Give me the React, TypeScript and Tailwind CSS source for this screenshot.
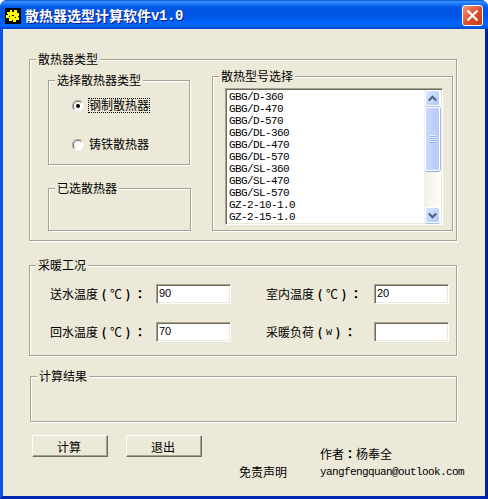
import { useState } from 'react';
import type { ReactNode } from 'react';

const MODELS = [
    'GBG/D-360',
    'GBG/D-470',
    'GBG/D-570',
    'GBG/DL-360',
    'GBG/DL-470',
    'GBG/DL-570',
    'GBG/SL-360',
    'GBG/SL-470',
    'GBG/SL-570',
    'GZ-2-10-1.0',
    'GZ-2-15-1.0'
];

const SUNKEN = 'bg-white border border-t-[#a5a294] border-l-[#a5a294] border-r-white border-b-white shadow-[inset_1px_1px_0_#6f6c60,inset_-1px_-1px_0_#ece9d8]';

interface GroupProps {
    title: string;
    className: string;
    children?: ReactNode;
}

// Etched frame: gray line with a white line one pixel down and right
function GroupBox({ title, className, children }: GroupProps) {
    return (
        <div className={`relative shrink-0 border border-[#a5a294] shadow-[1px_1px_0_#fff,inset_1px_1px_0_#fff] ${className}`}>
            <span className="absolute -top-[8px] left-[6px] px-[2px] h-[14px] leading-[14px] bg-[#ece9d8] whitespace-nowrap">{title}</span>
            {children}
        </div>
    );
}

function Radio({ checked, label, onSelect }: { checked: boolean; label: string; onSelect: () => void }) {
    return (
        <button type="button" onClick={onSelect} className="flex items-center h-[15px]">
            <svg width="12" height="12" viewBox="0 0 12 12" className="mr-1">
                <circle cx="6" cy="6" r="5.5" fill="#fff" />
                <path d="M1.9 10.1A5.5 5.5 0 0 1 10.1 1.9" fill="none" stroke="#a5a294" />
                <path d="M2.8 9.2A4.5 4.5 0 0 1 9.2 2.8" fill="none" stroke="#6f6c60" />
                {checked && <circle cx="6" cy="6" r="2" fill="#000" />}
            </svg>
            <span className={`h-[15px] w-[62px] leading-[12px] border border-dotted text-left whitespace-nowrap ${checked ? 'border-black' : 'border-transparent'}`}>{label}</span>
        </button>
    );
}

function Field({ label, unit, value, unitClass, inputGap }: { label: string; unit: string; value: string; unitClass: string; inputGap: string }) {
    const [text, setText] = useState(value);
    return (
        <label className="flex items-center h-5">
            <span className={`flex h-5 leading-5 whitespace-nowrap ${inputGap}`}>
                <span>{label}</span>
                <span className="w-3 text-center font-bold">(</span>
                <span className={`text-center ${unitClass}`}>{unit}</span>
                <span className="w-3 text-center font-bold">)</span>
                <span className="w-3 text-center font-bold font-['Noto_Sans_CJK_TC',sans-serif]">：</span>
            </span>
            <input
                value={text}
                onChange={e => setText(e.target.value)}
                className={`w-[75px] h-5 pl-[2px] pb-[2px] outline-none text-[11px] font-['Liberation_Sans',sans-serif] ${SUNKEN}`}
            />
        </label>
    );
}

function PushButton({ children }: { children: ReactNode }) {
    return (
        <button type="button" className="w-[76px] h-[22px] leading-[19px] pr-[2px] border border-t-white border-l-white border-r-[#6f6c60] border-b-[#6f6c60] shadow-[inset_-1px_-1px_0_#a5a294]">
            {children}
        </button>
    );
}

function ArrowButton({ down }: { down?: boolean }) {
    return (
        <div className="w-[15px] h-[16px] rounded-[2px] border border-white bg-gradient-to-br from-[#dbe6ff] to-[#b3c8f9] shadow-[0_1px_0_#a9bde9] flex items-center justify-center">
            <svg width="9" height="7" viewBox="0 0 9 7">
                <path d={down ? 'M0.8 1.5L4.5 5.2L8.2 1.5' : 'M0.8 5.5L4.5 1.8L8.2 5.5'} fill="none" stroke="#4d6185" strokeWidth="2.2" />
            </svg>
        </div>
    );
}

export default function App() {
    const [material, setMaterial] = useState('steel');

    return (
        <div className="w-[488px] h-[499px] bg-white font-['Noto_Sans_CJK_SC',sans-serif] text-[12px] text-black overflow-hidden">
            <div className="w-full h-full flex flex-col rounded-t-[7px] overflow-hidden bg-[#0144dc]">

                {/* Title bar */}
                <div className="h-[29px] shrink-0 flex items-center pl-[5px] pr-[5px] pt-[2px] bg-[linear-gradient(to_bottom,#0452c8_0%,#3b92ff_6%,#1a74f5_14%,#0257e6_26%,#0054e3_55%,#0262fb_75%,#0266ff_88%,#0147cb_100%)]">
                    <svg width="16" height="16" viewBox="0 0 16 16" shapeRendering="crispEdges">
                        <rect width="16" height="16" fill="#000" />
                        <path fill="#ff0" d="M5 2h2v2h2V2h3v3h2v3h-1v1h1v3h-3v2H8v-2H7v1H4v-3H1V7h2V6H2V4h3z" />
                        <path fill="#000" d="M7 7h2v1H7zM4 8h1v1H4zM10 9h1v1h-1z" />
                    </svg>
                    <h1 className="ml-1 flex-1 flex text-[14px] leading-[20px] font-bold text-white whitespace-nowrap [text-shadow:1px_1px_0_#0a1883]">
                        散热器选型计算软件
                        <span className="pt-px font-['Liberation_Mono',monospace] text-[14px] tracking-[-0.4px]">v1.0</span>
                    </h1>
                    <button type="button" className="w-[21px] h-[21px] rounded-[3px] border border-white bg-gradient-to-br from-[#ee9678] via-[#e0502f] to-[#c4390f] flex items-center justify-center">
                        <svg width="13" height="13" viewBox="0 0 13 13">
                            <path d="M1.5 1.5L11.5 11.5M11.5 1.5L1.5 11.5" stroke="#fff" strokeWidth="2.2" />
                        </svg>
                    </button>
                </div>

                <div className="flex-1 flex flex-col border-[3px] border-t-0 border-l-[#0855e8] border-r-[#001ea0] border-b-[#0025b0] bg-[#ece9d8] pl-[26px] pt-[30px]">

                    <GroupBox title="散热器类型" className="w-[428px] h-[182px] flex pl-[18px]">
                        <div className="flex flex-col pt-[20px]">
                            <GroupBox title="选择散热器类型" className="w-[142px] h-[85px] flex flex-col gap-[24px] pl-[23px] pt-[17px]">
                                <Radio checked={material === 'steel'} label="钢制散热器" onSelect={() => setMaterial('steel')} />
                                <Radio checked={material === 'iron'} label="铸铁散热器" onSelect={() => setMaterial('iron')} />
                            </GroupBox>
                            <GroupBox title="已选散热器" className="mt-[23px] w-[143px] h-[43px]" />
                        </div>

                        <GroupBox title="散热型号选择" className="ml-[21px] mt-[16px] w-[241px] h-[155px] pl-[12px] pt-[11px]">
                            <div className={`w-[218px] h-[137px] flex justify-between p-[1px] ${SUNKEN}`}>
                                <ul className="pl-[2px] pt-[1px] font-['Liberation_Mono',monospace] text-[11px] tracking-[-0.6px] leading-3 whitespace-nowrap">
                                    {MODELS.map(m => (<li key={m}>{m}</li>))}
                                </ul>
                                <div className="w-[17px] h-full shrink-0 flex flex-col items-center bg-gradient-to-r from-[#f1f0e8] to-[#fefefb]">
                                    <ArrowButton />
                                    <div className="mt-[1px] w-[15px] h-[64px] rounded-[2px] border border-white bg-gradient-to-r from-[#c9d8ff] to-[#b7cafb] shadow-[0_1px_0_#8da6dc,1px_0_0_#a9bde9] flex flex-col items-center justify-center">
                                        <i className="w-[6px] h-px bg-[#eef4ff]" />
                                        <i className="w-[6px] h-px ml-px bg-[#8cb0f8]" />
                                        <i className="w-[6px] h-px bg-[#eef4ff]" />
                                        <i className="w-[6px] h-px ml-px bg-[#8cb0f8]" />
                                        <i className="w-[6px] h-px bg-[#eef4ff]" />
                                        <i className="w-[6px] h-px ml-px bg-[#8cb0f8]" />
                                        <i className="w-[6px] h-px bg-[#eef4ff]" />
                                        <i className="w-[6px] h-px ml-px bg-[#8cb0f8]" />
                                    </div>
                                    <div className="flex-1" />
                                    <ArrowButton down />
                                </div>
                            </div>
                        </GroupBox>
                    </GroupBox>

                    <GroupBox title="采暖工况" className="mt-[24px] w-[428px] h-[91px] flex pt-[18px] pl-[20px]">
                        <div className="flex flex-col gap-[18px]">
                            <Field label="送水温度" unit="℃" value="90" unitClass="w-3" inputGap="w-[106px]" />
                            <Field label="回水温度" unit="℃" value="70" unitClass="w-3" inputGap="w-[106px]" />
                        </div>
                        <div className="ml-[35px] flex flex-col gap-[18px]">
                            <Field label="室内温度" unit="℃" value="20" unitClass="w-3" inputGap="w-[108px]" />
                            <Field label="采暖负荷" unit="w" value="" unitClass="w-[6px] pt-px text-[10px] font-['Liberation_Mono',monospace]" inputGap="w-[108px]" />
                        </div>
                    </GroupBox>

                    <GroupBox title="计算结果" className="mt-[20px] ml-px w-[427px] h-[46px]" />

                    <div className="flex mt-[13px]">
                        <div className="flex gap-[18px] pl-[3px]">
                            <PushButton>计算</PushButton>
                            <PushButton>退出</PushButton>
                        </div>
                        <div className="flex items-end ml-[37px] mt-[11px] leading-[16px] whitespace-nowrap">
                            <span className="w-[81px]">免责声明</span>
                            <div>
                                <p className="mb-[2px] flex">作者<span className="font-['Noto_Sans_CJK_TC',sans-serif] font-bold">：</span>杨奉全</p>
                                <p className="font-['Liberation_Mono',monospace] text-[11px] tracking-[-0.6px]">yangfengquan@outlook.com</p>
                            </div>
                        </div>
                    </div>
                </div>
            </div>
        </div>
    );
}
